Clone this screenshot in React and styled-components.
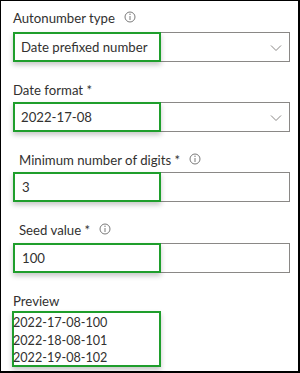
import React from "react"
import styled, { createGlobalStyle } from "styled-components"

const GlobalStyle = createGlobalStyle`
    body {
        margin: 0;
        background: #ffffff;
        font-family: "Lato", "Noto Sans", sans-serif;
    }
`

const InfoIcon = () => (
    <svg width="12" height="12" viewBox="0 0 12 12">
        <circle cx="6" cy="6" r="5" fill="none" stroke="#7a7a7a" strokeWidth="1" />
        <line x1="6" y1="5" x2="6" y2="9" stroke="#7a7a7a" strokeWidth="1" />
        <circle cx="6" cy="3.3" r="0.7" fill="#7a7a7a" />
    </svg>
)

const Chevron = () => (
    <svg width="12" height="8" viewBox="0 0 12 8">
        <polyline points="1,1.5 6,6.5 11,1.5" fill="none" stroke="#8a8886" strokeWidth="1" />
    </svg>
)

const Field = ({ label, info, indent, top, gap, value, textIndent, select }) => (
    <FieldWrap top={top}>
        <Label indent={indent} gap={gap}>
            {label}
            {info && <IconSlot><InfoIcon /></IconSlot>}
        </Label>
        <InputBox textIndent={textIndent}>
            {value}
            {select && <ChevronSlot><Chevron /></ChevronSlot>}
            <Highlight />
        </InputBox>
    </FieldWrap>
)

const App = () => {
    const preview = ["2022-17-08-100", "2022-18-08-101", "2022-19-08-102"]
    return (
        <>
            <GlobalStyle />
            <Frame>
                <Field label="Autonumber type" info top={0} gap={4} value="Date prefixed number" textIndent={7} select />
                <Field label="Date format *" top={18} gap={2} value="2022-17-08" textIndent={7} select />
                <Field label="Minimum number of digits *" info indent={6} top={18} gap={2} value="3" textIndent={8} />
                <Field label="Seed value *" info indent={6} top={18} gap={3} value="100" textIndent={8} />
                <PreviewLabel>Preview</PreviewLabel>
                <PreviewBox>
                    {preview.map((line) => (
                        <PreviewLine key={line}>{line}</PreviewLine>
                    ))}
                </PreviewBox>
            </Frame>
        </>
    )
}

const Frame = styled.div`
    box-sizing: border-box;
    width: 300px;
    height: 373px;
    border-top: 1px solid #000;
    border-left: 1px solid #000;
    border-right: 2px solid #000;
    border-bottom: 2px solid #000;
    padding: 7px 0 0 12px;
    display: flex;
    flex-direction: column;
    color: #323130;
`
const FieldWrap = styled.div`
    margin-top: ${props => props.top}px;
    display: flex;
    flex-direction: column;
`
const Label = styled.div`
    display: flex;
    align-items: center;
    height: 20px;
    line-height: 20px;
    font-size: 13.2px;
    padding-left: ${props => props.indent || 0}px;
    margin-bottom: ${props => props.gap}px;
    color: #323130;
`
const IconSlot = styled.span`
    display: inline-flex;
    margin-left: 9px;
    margin-top: -2px;
`
const InputBox = styled.div`
    position: relative;
    box-sizing: border-box;
    width: 277px;
    height: 30px;
    border: 1px solid #8a8886;
    display: flex;
    align-items: center;
    padding-left: ${props => props.textIndent}px;
    font-size: 13.2px;
    color: #323130;
`
const ChevronSlot = styled.span`
    display: inline-flex;
    margin-left: auto;
    margin-right: 7px;
    margin-top: 1px;
`
const Highlight = styled.span`
    position: absolute;
    left: -1px;
    top: -1px;
    box-sizing: border-box;
    width: 148px;
    height: 30px;
    border: 2px solid #1f9e2c;
    box-shadow: 0 3px 5px rgba(0, 0, 0, 0.22);
    pointer-events: none;
`
const PreviewLabel = styled.div`
    margin-top: 18px;
    height: 20px;
    line-height: 20px;
    font-size: 13.2px;
    color: #323130;
`
const PreviewBox = styled.div`
    box-sizing: border-box;
    width: 149px;
    height: 56px;
    margin-left: -1px;
    border: 2px solid #1f9e2c;
    box-shadow: 0 3px 5px rgba(0, 0, 0, 0.22);
    padding-top: 1px;
    display: flex;
    flex-direction: column;
`
const PreviewLine = styled.div`
    font-size: 12.6px;
    line-height: 17.5px;
    color: #323130;
    margin-left: -1px;
`

export default App
